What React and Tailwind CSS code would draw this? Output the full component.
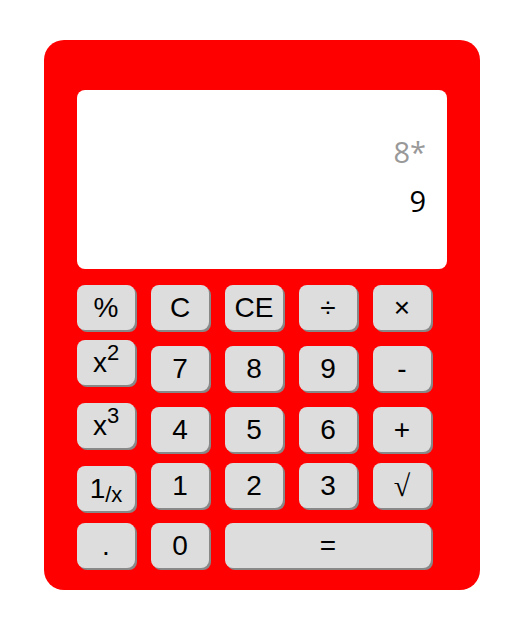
const btn =
  "w-[58px] h-[45px] rounded-[8px] bg-[#dddddd] shadow-[2px_2px_0_#888888] flex items-center justify-center text-[28px] text-black leading-none";

function Key({ children, className = "" }) {
  return <div className={`${btn} ${className}`}>{children}</div>;
}

export default function App() {
  return (
    <div className="min-h-screen bg-white pt-[40px] pl-[44px]" style={{ fontFamily: '"Liberation Sans", Arial, sans-serif' }}>
      <div className="w-[436px] h-[550px] bg-[#ff0000] rounded-[20px] pt-[50px] px-[33px]">
        {/* display */}
        <div
          className="h-[179px] bg-white rounded-[8px] pt-[37px] pr-[21px] text-right text-[29px] font-medium leading-[49px]"
          style={{ fontFamily: '"Open Sans", sans-serif' }}
        >
          <div className="text-[#999999]">8*</div>
          <div className="text-black">9</div>
        </div>

        <div className="mt-[16px] flex flex-col">
          <div className="flex items-start gap-[16px]">
            <Key>%</Key>
            <Key>C</Key>
            <Key>CE</Key>
            <Key>÷</Key>
            <Key>×</Key>
          </div>
          <div className="mt-[10px] flex items-start gap-[16px]">
            <Key>
              x<sup className="text-[22px] relative -top-[10px]">2</sup>
            </Key>
            <Key className="mt-[6px]">7</Key>
            <Key className="mt-[6px]">8</Key>
            <Key className="mt-[6px]">9</Key>
            <Key className="mt-[6px]">-</Key>
          </div>
          <div className="mt-[12px] flex items-start gap-[16px]">
            <Key>
              x<sup className="text-[22px] relative -top-[10px]">3</sup>
            </Key>
            <Key className="mt-[4px]">4</Key>
            <Key className="mt-[4px]">5</Key>
            <Key className="mt-[4px]">6</Key>
            <Key className="mt-[4px]">+</Key>
          </div>
          <div className="mt-[11px] flex items-start gap-[16px]">
            <Key className="mt-[3px]">
              1<sub className="text-[22px] relative top-[6px]">/x</sub>
            </Key>
            <Key>1</Key>
            <Key>2</Key>
            <Key>3</Key>
            <Key>
              <span className="text-[30px]" style={{ fontFamily: '"Liberation Serif", "DejaVu Serif", serif' }}>√</span>
            </Key>
          </div>
          <div className="mt-[12px] flex items-start gap-[16px]">
            <Key>.</Key>
            <Key>0</Key>
            <Key className="w-[206px]">=</Key>
          </div>
        </div>
      </div>
    </div>
  );
}
